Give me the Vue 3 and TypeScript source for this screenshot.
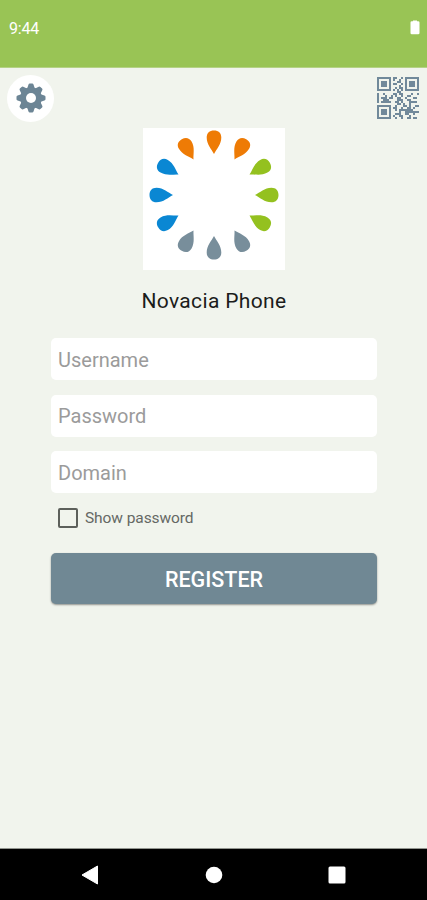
<script setup lang="ts">
import { ref } from 'vue'

interface Petal {
  angle: number
  color: string
}

const orange = '#ee7b05'
const green = '#94c11f'
const grey = '#788e9b'
const blue = '#0a87d3'

const petals: Petal[] = [
  orange, orange, green, green, green, grey,
  grey, grey, blue, blue, blue, orange,
].map((color, i) => ({ angle: i * 30, color }))

const teeth: number[] = [0, 45, 90, 135, 180, 225, 270, 315]

const qrRows: string[] = [
  '#######.##..#.#######',
  '#.....#.#..#..#.....#',
  '#.###.#...##..#.###.#',
  '#.###.#.##..#.#.###.#',
  '#.###.#....#..#.###.#',
  '#.....#..#.##.#.....#',
  '#######.#.#.#.#######',
  '..........##.........',
  '#..#....##.##....#..#',
  '#...#..#.#..#..##....',
  '#.###.##..##..#...##.',
  '#..###....###..##....',
  '#.#####..##.#...####.',
  '..........##.#..#....',
  '#######..#...##.#..##',
  '#.....#.##..#..##.#..',
  '#.###.#..#.#######...',
  '#.###.#....#..#######',
  '#.###.#..###..##..#..',
  '#.....#.#..##...#....',
  '#######..#..#..##.##.',
]
const qrPath = qrRows
  .flatMap((row, y) => [...row].map((c, x) => (c === '#' ? `M${x} ${y}h1v1h-1z` : '')))
  .join('')

const username = ref('')
const password = ref('')
const domain = ref('')
const showPassword = ref(false)
</script>

<template>
  <div class="screen">
    <header class="status">
      <span class="time">9:44</span>
      <svg class="battery" viewBox="0 0 10 15" width="10" height="15">
        <path d="M3 1.200V.4h4v.8h1.200q1.300 0 1.300 1.300v10.500q0 1.300-1.300 1.300H1.800q-1.300 0-1.300-1.300V2.500q0-1.300 1.300-1.300z" fill="#fff" />
      </svg>
    </header>

    <main class="content">
      <div class="tools">
        <button class="gear" type="button" aria-label="Settings">
          <svg viewBox="-15 -15 30 30" width="30" height="30">
            <g fill="#6c8595">
              <path
                v-for="a in teeth"
                :key="a"
                :transform="`rotate(${a})`"
                d="M-4-9L-2.500-13.400Q-2.200-14.500-1.200-14.500H1.200Q2.200-14.500 2.500-13.400L4-9z"
              />
              <circle r="10.800" />
            </g>
            <circle r="5" fill="#fff" />
          </svg>
        </button>
        <button class="qr" type="button" aria-label="Scan code">
          <svg viewBox="0 0 21 21" width="42" height="42">
            <path :d="qrPath" fill="#71899a" />
          </svg>
        </button>
      </div>

      <div class="logo">
        <svg viewBox="-71 -67 142 142" width="142" height="142">
          <path
            v-for="p in petals"
            :key="p.angle"
            :transform="`rotate(${p.angle})`"
            :fill="p.color"
            d="M0-41C-2.500-46-7.300-50.500-7.300-57.500C-7.300-62-4.500-64.500 0-64.500S7.300-62 7.300-57.500C7.300-50.500 2.500-46 0-41z"
          />
        </svg>
      </div>
      <h1 class="title">Novacia Phone</h1>

      <form class="form" @submit.prevent>
        <input v-model="username" class="field" type="text" placeholder="Username" />
        <input v-model="password" class="field" :type="showPassword ? 'text' : 'password'" placeholder="Password" />
        <input v-model="domain" class="field" type="text" placeholder="Domain" />
        <label class="check">
          <input v-model="showPassword" class="box" type="checkbox" />
          <span class="check-text">Show password</span>
        </label>
        <button class="register" type="submit">REGISTER</button>
      </form>
    </main>

    <nav class="navbar">
      <svg viewBox="0 0 18 20" width="18" height="20"><path d="M1 10L16.500 1V19z" fill="#fff" stroke="#fff" stroke-linejoin="round" /></svg>
      <svg viewBox="0 0 18 18" width="18" height="18"><circle cx="9" cy="9" r="8.300" fill="#fff" /></svg>
      <svg viewBox="0 0 18 18" width="18" height="18"><rect x=".5" y=".5" width="17" height="17" rx="1.500" fill="#fff" /></svg>
    </nav>
  </div>
</template>

<style>
body {
  margin: 0;
  background: #f1f4ed;
}
</style>

<style scoped>
.screen {
  display: flex;
  flex-direction: column;
  width: 427px;
  height: 900px;
  overflow: hidden;
  background: #f1f4ed;
  font-family: Roboto, sans-serif;
}
.status {
  display: flex;
  justify-content: space-between;
  box-sizing: border-box;
  height: 68px;
  padding: 19px 7px 0 9px;
  background: #99c455;
  border-bottom: 1px solid #b5d286;
}
.time {
  color: #fff;
  font-size: 16px;
  line-height: 19px;
  letter-spacing: -0.2px;
}
.battery {
  margin-top: 1px;
}
.content {
  flex: 1;
  display: flex;
  flex-direction: column;
  align-items: center;
}
.tools {
  display: flex;
  justify-content: space-between;
  align-items: center;
  align-self: stretch;
  height: 60px;
  box-sizing: border-box;
  padding: 0 8px 0 7px;
}
button {
  border: 0;
  padding: 0;
  font-family: inherit;
}
.gear {
  display: flex;
  align-items: center;
  justify-content: center;
  width: 47px;
  height: 47px;
  border-radius: 50%;
  background: #fff;
}
.qr {
  display: flex;
  background: transparent;
}
.logo {
  display: flex;
  width: 142px;
  height: 142px;
  background: #fff;
}
.title {
  margin: 18px 0 0 1px;
  color: #1b1c1b;
  font-size: 21px;
  font-weight: 400;
  line-height: 26px;
  letter-spacing: 0.35px;
}
.form {
  display: flex;
  flex-direction: column;
  width: 326px;
  margin-top: 24.400px;
  padding-left: 1px;
}
.field {
  box-sizing: border-box;
  width: 100%;
  height: 42px;
  margin: 0 0 14.400px;
  padding: 1px 7px 0;
  border: 0;
  border-radius: 5px;
  outline: 0;
  background: #fff;
  color: #222;
  font-family: inherit;
  font-size: 20px;
}
.field::placeholder {
  color: #9b9b9b;
  opacity: 1;
}
.check {
  display: flex;
  align-items: center;
  gap: 7px;
  height: 20px;
  margin-top: 0.400px;
  padding-left: 7px;
}
.box {
  appearance: none;
  box-sizing: border-box;
  width: 20px;
  height: 20px;
  margin: 0;
  border: 2px solid #5d605b;
  border-radius: 2px;
}
.check-text {
  color: #656864;
  font-size: 15.500px;
  letter-spacing: -0.08px;
}
.register {
  height: 51px;
  margin-top: 25px;
  padding-top: 2px;
  border-radius: 5px;
  background: #708894;
  box-shadow: 0 1px 2px rgba(0, 0, 0, 0.4);
  color: #fff;
  font-size: 21.500px;
  font-weight: 500;
}
.navbar {
  display: flex;
  align-items: center;
  justify-content: space-between;
  box-sizing: border-box;
  height: 52px;
  padding: 0 81px 0 81px;
  border-top: 1px solid #92958f;
  background: #000;
}
</style>
